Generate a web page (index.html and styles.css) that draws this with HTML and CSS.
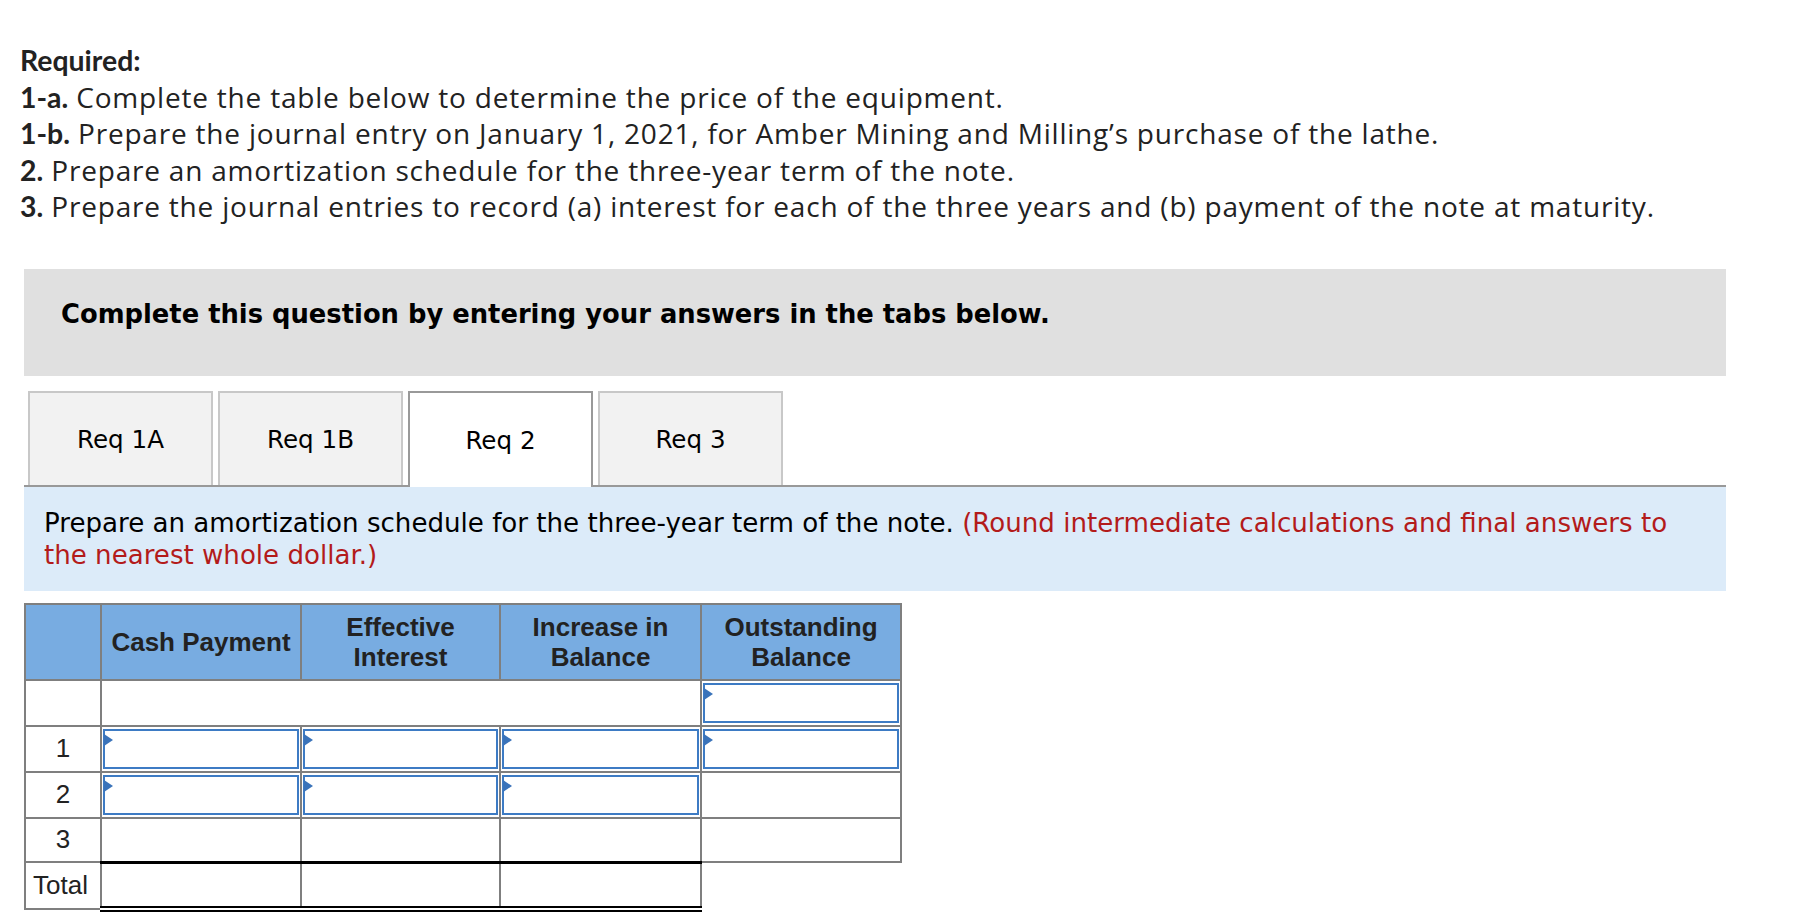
FILE: index.html
```html
<!DOCTYPE html>
<html lang="en">
<head>
<meta charset="utf-8">
<title>Amortization schedule</title>
<link rel="stylesheet" href="styles.css">
</head>
<body>
<div class="page">
  <div class="required">
    <div><b>Required:</b></div>
    <div><b>1-a.</b> Complete the table below to determine the price of the equipment.</div>
    <div><b>1-b.</b> Prepare the journal entry on January 1, 2021, for Amber Mining and Milling’s purchase of the lathe.</div>
    <div><b>2.</b> Prepare an amortization schedule for the three-year term of the note.</div>
    <div><b>3.</b> Prepare the journal entries to record (a) interest for each of the three years and (b) payment of the note at maturity.</div>
  </div>

  <div class="question">
    <div class="banner">Complete this question by entering your answers in the tabs below.</div>

    <div class="tabs">
      <div class="tab">Req 1A</div>
      <div class="tab">Req 1B</div>
      <div class="tab active">Req 2</div>
      <div class="tab">Req 3</div>
    </div>

    <div class="instr">Prepare an amortization schedule for the three-year term of the note. <span class="red">(Round intermediate calculations and final answers to</span><br><span class="red">the nearest whole dollar.)</span></div>

    <table class="sched">
      <colgroup>
        <col class="c0"><col class="c1"><col class="c2"><col class="c3"><col class="c4">
      </colgroup>
      <thead>
        <tr>
          <th></th>
          <th>Cash Payment</th>
          <th>Effective<br>Interest</th>
          <th>Increase in<br>Balance</th>
          <th>Outstanding<br>Balance</th>
        </tr>
      </thead>
      <tbody>
        <tr>
          <td class="lbl"></td>
          <td colspan="3"></td>
          <td class="in"><div class="box"></div></td>
        </tr>
        <tr>
          <td class="lbl">1</td>
          <td class="in"><div class="box"></div></td>
          <td class="in"><div class="box"></div></td>
          <td class="in"><div class="box"></div></td>
          <td class="in"><div class="box"></div></td>
        </tr>
        <tr>
          <td class="lbl">2</td>
          <td class="in"><div class="box"></div></td>
          <td class="in"><div class="box"></div></td>
          <td class="in"><div class="box"></div></td>
          <td></td>
        </tr>
        <tr>
          <td class="lbl">3</td>
          <td></td>
          <td></td>
          <td></td>
          <td></td>
        </tr>
        <tr class="total">
          <td class="lbl total-lbl">Total</td>
          <td class="tot"></td>
          <td class="tot"></td>
          <td class="tot"></td>
          <td class="none"></td>
        </tr>
      </tbody>
    </table>
  </div>
</div>
</body>
</html>
```

FILE: styles.css
```css
html, body {
  margin: 0;
  padding: 0;
  background: #ffffff;
}

.page {
  padding: 42px 0 0 20px;
}

.required {
  font-family: "Open Sans", Lato, sans-serif;
  font-size: 28px;
  line-height: 36.5px;
  color: #222222;
  letter-spacing: 0.8px;
}

.required b {
  font-family: Lato, "Open Sans", sans-serif;
  font-weight: 700;
  font-size: 28.4px;
  letter-spacing: 0;
}

.question {
  margin: 44px 0 0 4px;
  width: 1702px;
}

.banner {
  background: #e0e0e0;
  height: 107px;
  box-sizing: border-box;
  padding: 31px 0 0 37px;
  font-family: "DejaVu Sans", Verdana, sans-serif;
  font-weight: 700;
  font-size: 25.8px;
  line-height: 28px;
  color: #000000;
}

.tabs {
  display: flex;
  gap: 5px;
  margin-top: 15px;
  padding-left: 4px;
  border-bottom: 2px solid #999999;
}

.tab {
  width: 185px;
  height: 94px;
  box-sizing: border-box;
  background: #f2f2f2;
  border: 2px solid #c8c8c8;
  border-bottom: none;
  display: flex;
  align-items: center;
  justify-content: center;
  font-family: "DejaVu Sans", Verdana, sans-serif;
  font-size: 24.6px;
  color: #000000;
  padding-top: 2px;
}

.tab.active {
  background: #ffffff;
  border-color: #999999;
  height: 96px;
  margin-bottom: -2px;
}

.instr {
  background: #dcebf9;
  height: 104px;
  box-sizing: border-box;
  padding: 20px 18px 0 20px;
  font-family: "DejaVu Sans", Verdana, sans-serif;
  font-size: 26.1px;
  line-height: 32px;
  color: #000000;
}

.red {
  color: #b31b1b;
}

.sched {
  margin-top: 12px;
  border-collapse: collapse;
  table-layout: fixed;
  width: 876px;
  font-family: "Liberation Sans", Arial, sans-serif;
  color: #222222;
}

.c0 { width: 76px; }
.c1 { width: 200px; }
.c2 { width: 199px; }
.c3 { width: 201px; }
.c4 { width: 200px; }

.sched th {
  background: #78ace1;
  border: 2px solid #7f7f7f;
  height: 74px;
  padding: 0 4px;
  font-size: 26px;
  line-height: 30px;
  font-weight: 700;
  text-align: center;
  vertical-align: middle;
}

.sched td {
  border: 2px solid #7f7f7f;
  height: 42px;
  padding: 0;
  font-size: 26px;
  text-align: center;
  vertical-align: middle;
}

.sched td.total-lbl {
  padding-right: 5px;
}

.sched td.in {
  padding: 1px;
}

.box {
  position: relative;
  height: 36px;
  border: 2px solid #3d7bc4;
  background: #ffffff;
}

.box::before {
  content: "";
  position: absolute;
  left: -1px;
  top: 3px;
  border-left: 9px solid #3a73ba;
  border-top: 6px solid transparent;
  border-bottom: 6px solid transparent;
}

.sched td.tot {
  border-top: 3px solid #000000;
  border-bottom: 6px double #000000;
}

.sched td.none {
  border-right: none;
  border-bottom: none;
}
```
